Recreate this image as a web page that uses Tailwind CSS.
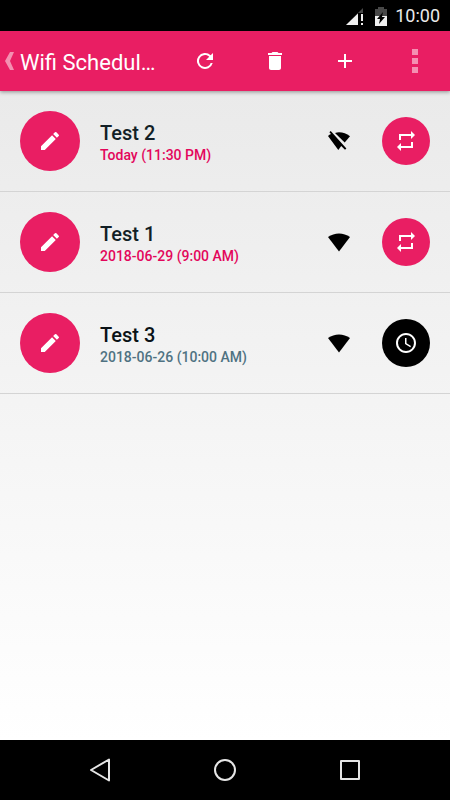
<!DOCTYPE html>
<html lang="en">
<head>
<meta charset="utf-8">
<meta name="viewport" content="width=device-width, initial-scale=1">
<title>Wifi Scheduler</title>
<script src="https://cdn.jsdelivr.net/npm/@tailwindcss/browser@4"></script>
</head>
<body class="flex min-h-screen flex-col bg-white font-[Roboto,sans-serif]">
<svg class="hidden" aria-hidden="true">
  <symbol id="pencil" viewBox="0 0 24 24"><path d="M3 17.25V21h3.75L17.81 9.94l-3.75-3.75L3 17.25zM20.71 7.04a1 1 0 0 0 0-1.41l-2.34-2.34a1 1 0 0 0-1.41 0l-1.83 1.83 3.75 3.75 1.83-1.83z"/></symbol>
  <symbol id="repeat" viewBox="0 0 24 24"><path d="M7 7h10v3l4-4-4-4v3H5v6h2V7zm10 10H7v-3l-4 4 4 4v-3h12v-6h-2v4z"/></symbol>
  <symbol id="clock" viewBox="0 0 24 24"><path d="M11.99 2C6.47 2 2 6.48 2 12s4.47 10 9.99 10C17.52 22 22 17.52 22 12S17.52 2 11.99 2zM12 20a8 8 0 1 1 0-16 8 8 0 0 1 0 16zm.5-13H11v6l5.25 3.15.75-1.23-4.5-2.67z"/></symbol>
  <symbol id="wifi" viewBox="0 0 24 24"><path d="M1 7Q6 3.500 12 3.500T23 7L12 21.500z"/></symbol>
  <symbol id="wifi-off" viewBox="0 0 24 24"><path d="M8 4Q10 3.300 12 3.300 18 3.300 23 7.300L17.700 13.600z"/><path d="M3.700 2 2.400 3.300 4 5Q2.400 5.700 1 7L11.300 21 14.200 17 18 20.800 19.400 19.500z"/></symbol>
</svg>

<div class="flex h-[31px] shrink-0 items-center justify-end bg-black pr-[10px] text-[#eaeaea]">
  <svg class="mr-2 h-5 w-5" viewBox="0 0 20 20" aria-hidden="true"><path fill="#484848" d="M18 2v5h-5v12H1z"/><path fill="#f0f0f0" d="M13 7.500V19H1zM16 8h2v7h-2zM16 17h2v2h-2z"/></svg>
  <svg class="mr-[6px] h-5 w-4" viewBox="0 0 16 20" aria-hidden="true"><path fill="#484848" d="M5 1h6v2h3v7H2V3h3z"/><path fill="#f0f0f0" d="M2 10h12v10H2z"/><path fill="#000" d="M10 6 4 13h3l-1 5 6-7H9z"/></svg>
  <span class="text-lg leading-none">10:00</span>
</div>

<header class="relative z-10 flex h-[60px] shrink-0 items-center bg-[#e91e63] text-white shadow-[0_1px_4px_rgba(0,0,0,0.4)]">
  <div class="flex min-w-0 flex-1 items-center pl-1">
    <button class="flex w-4 shrink-0" aria-label="Back"><svg class="h-5 w-3" viewBox="0 0 12 20" fill="#fff" fill-opacity=".5"><path d="M6 1h4L6 10l4 9H6L1 10z"/></svg></button>
    <h1 class="truncate pt-[3px] text-[22px] leading-8">Wifi Schedul…</h1>
  </div>
  <nav class="flex shrink-0" aria-label="Actions">
    <button class="flex h-[60px] w-[70px] items-center justify-center" aria-label="Refresh"><svg class="size-6" viewBox="0 0 24 24" fill="currentColor"><path d="M17.650 6.350A8 8 0 1 0 19.730 14h-2.080A6 6 0 1 1 12 6c1.660 0 3.140.690 4.220 1.780L13 11h7V4l-2.350 2.350z"/></svg></button>
    <button class="flex h-[60px] w-[70px] items-center justify-center" aria-label="Delete"><svg class="size-6" viewBox="0 0 24 24" fill="currentColor"><path d="M6 19c0 1.100.900 2 2 2h8c1.100 0 2-.900 2-2V7H6v12zM19 4h-3.500l-1-1h-5l-1 1H5v2h14V4z"/></svg></button>
    <button class="flex h-[60px] w-[70px] items-center justify-center" aria-label="Add"><svg class="size-6" viewBox="0 0 24 24" fill="currentColor"><path d="M19 13h-6v6h-2v-6H5v-2h6V5h2v6h6v2z"/></svg></button>
    <button class="flex h-[60px] w-[70px] items-center justify-center" aria-label="More options"><svg class="h-[26px] w-[6px]" viewBox="0 0 6 26" fill="#fff" fill-opacity=".5"><path d="M0 1h6v6H0zM0 10h6v6H0zM0 19h6v6H0z"/></svg></button>
  </nav>
</header>

<main class="flex-1 bg-linear-to-b from-[#eaeaea] to-white">
  <ul>
    <li class="flex h-[101px] items-center border-b border-[#d4d4d4] px-5">
      <button class="mr-5 flex size-[60px] shrink-0 items-center justify-center rounded-full bg-[#e91e63] text-white" aria-label="Edit Test 2"><svg class="size-6" fill="currentColor"><use href="#pencil"/></svg></button>
      <div class="min-w-0 flex-1 pt-[3px]">
        <h2 class="text-xl leading-6 font-medium text-[#121f26]">Test 2</h2>
        <p class="text-sm leading-5 font-medium text-[#e3065b]">Today (11:30 PM)</p>
      </div>
      <svg class="mr-[31px] size-6 shrink-0" role="img" aria-label="Wifi off"><use href="#wifi-off"/></svg>
      <button class="flex size-12 shrink-0 items-center justify-center rounded-full bg-[#e91e63] text-white" aria-label="Repeating"><svg class="size-6" fill="currentColor"><use href="#repeat"/></svg></button>
    </li>
    <li class="flex h-[101px] items-center border-b border-[#d4d4d4] px-5">
      <button class="mr-5 flex size-[60px] shrink-0 items-center justify-center rounded-full bg-[#e91e63] text-white" aria-label="Edit Test 1"><svg class="size-6" fill="currentColor"><use href="#pencil"/></svg></button>
      <div class="min-w-0 flex-1 pt-[3px]">
        <h2 class="text-xl leading-6 font-medium text-[#121f26]">Test 1</h2>
        <p class="text-sm leading-5 font-medium text-[#e3065b]">2018-06-29 (9:00 AM)</p>
      </div>
      <svg class="mr-[31px] size-6 shrink-0" role="img" aria-label="Wifi on"><use href="#wifi"/></svg>
      <button class="flex size-12 shrink-0 items-center justify-center rounded-full bg-[#e91e63] text-white" aria-label="Repeating"><svg class="size-6" fill="currentColor"><use href="#repeat"/></svg></button>
    </li>
    <li class="flex h-[101px] items-center border-b border-[#d4d4d4] px-5">
      <button class="mr-5 flex size-[60px] shrink-0 items-center justify-center rounded-full bg-[#e91e63] text-white" aria-label="Edit Test 3"><svg class="size-6" fill="currentColor"><use href="#pencil"/></svg></button>
      <div class="min-w-0 flex-1 pt-[3px]">
        <h2 class="text-xl leading-6 font-medium text-[#0a1216]">Test 3</h2>
        <p class="text-sm leading-5 font-medium text-[#4f7282]">2018-06-26 (10:00 AM)</p>
      </div>
      <svg class="mr-[31px] size-6 shrink-0" role="img" aria-label="Wifi on"><use href="#wifi"/></svg>
      <button class="flex size-12 shrink-0 items-center justify-center rounded-full bg-black text-white" aria-label="One time"><svg class="size-6" fill="currentColor"><use href="#clock"/></svg></button>
    </li>
  </ul>
</main>

<nav class="flex h-[60px] shrink-0 items-center justify-center bg-black text-[#e6e6e6]" aria-label="System">
  <button class="flex h-[60px] w-[125px] items-center justify-center" aria-label="Back"><svg class="size-6" viewBox="0 0 24 24" fill="none" stroke="currentColor" stroke-width="2" stroke-linejoin="round"><path d="M21 1.500v21L3 12z"/></svg></button>
  <button class="flex h-[60px] w-[125px] items-center justify-center" aria-label="Home"><svg class="size-6" viewBox="0 0 24 24" fill="none" stroke="currentColor" stroke-width="2"><circle cx="12" cy="12" r="10"/></svg></button>
  <button class="flex h-[60px] w-[125px] items-center justify-center" aria-label="Recent apps"><svg class="size-6" viewBox="0 0 24 24" fill="none" stroke="currentColor" stroke-width="2" stroke-linejoin="round"><path d="M3 3h18v18H3z"/></svg></button>
</nav>
</body>
</html>
